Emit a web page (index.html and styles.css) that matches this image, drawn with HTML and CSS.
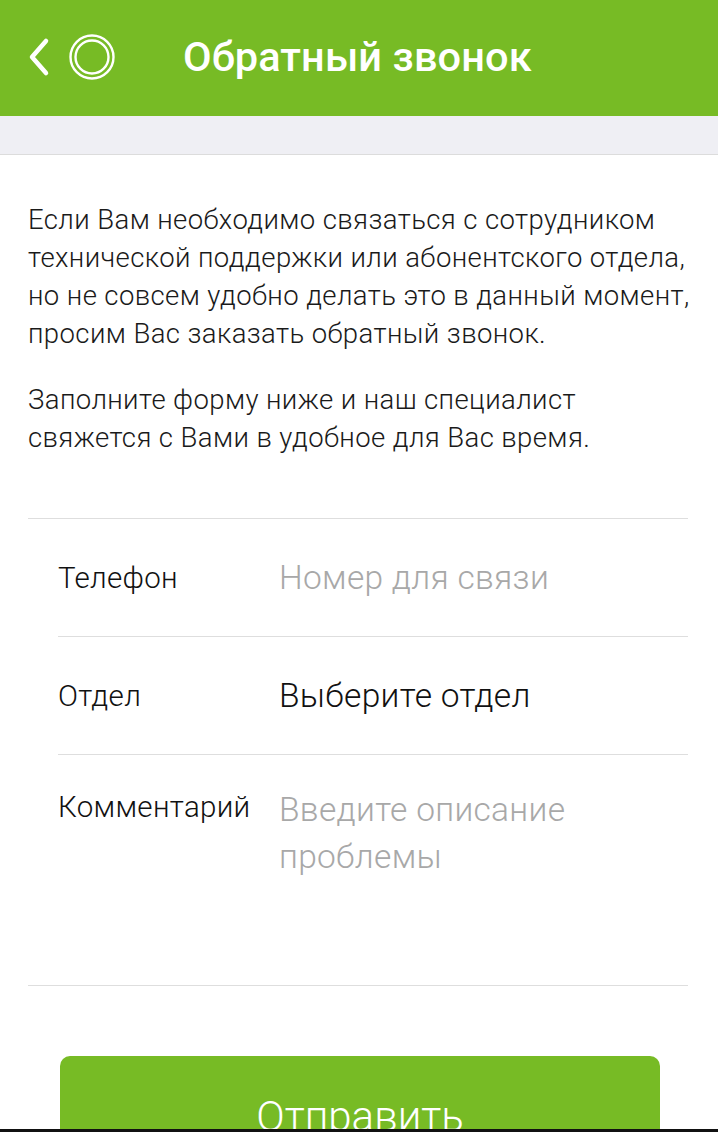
FILE: index.html
```html
<!DOCTYPE html>
<html lang="ru">
<head>
<meta charset="utf-8">
<title>Обратный звонок</title>
<link rel="stylesheet" href="styles.css">
</head>
<body>
<div class="screen">
  <header class="appbar">
    <div class="appbar-icons">
      <svg class="back" width="26" height="40" viewBox="0 0 26 40"><path d="M20 4 L6 20 L20 36" fill="none" stroke="#fff" stroke-width="4.5" stroke-linecap="round" stroke-linejoin="round"/></svg>
      <svg class="logo" width="48" height="48" viewBox="0 0 48 48"><circle cx="24" cy="24" r="21.5" fill="none" stroke="#fff" stroke-width="2.4"/><circle cx="24" cy="24" r="16.5" fill="none" stroke="#fff" stroke-width="2.4"/></svg>
    </div>
    <h1 class="title">Обратный звонок</h1>
  </header>
  <div class="subbar"></div>
  <main class="content">
    <p class="intro">Если Вам необходимо связаться с сотрудником<br>технической поддержки или абонентского отдела,<br>но не совсем удобно делать это в данный момент,<br>просим Вас заказать обратный звонок.</p>
    <p class="intro second">Заполните форму ниже и наш специалист<br>свяжется с Вами в удобное для Вас время.</p>
    <div class="form">
      <div class="row">
        <span class="label">Телефон</span>
        <span class="value placeholder">Номер для связи</span>
      </div>
      <div class="row">
        <span class="label">Отдел</span>
        <span class="value">Выберите отдел</span>
      </div>
      <div class="row comment">
        <span class="label">Комментарий</span>
        <span class="value placeholder">Введите описание<br>проблемы</span>
      </div>
    </div>
    <div class="actions">
      <button class="submit">Отправить</button>
    </div>
  </main>
  <div class="bottom-strip"></div>
</div>
</body>
</html>
```
FILE: styles.css
```css
html, body {
  margin: 0;
  padding: 0;
  background: #fff;
}
body {
  font-family: Roboto, "Noto Sans", "DejaVu Sans", sans-serif;
  color: #1a1a1a;
}
.screen {
  width: 718px;
  height: 1132px;
  overflow: hidden;
  position: relative;
  display: flex;
  flex-direction: column;
}
.appbar {
  height: 116px;
  flex: none;
  background: #77bb25;
  display: flex;
  align-items: center;
}
.appbar-icons {
  display: flex;
  align-items: center;
  padding-left: 26px;
  gap: 16px;
  width: 183px;
  box-sizing: border-box;
  margin-top: -2px;
}
.back { display: block; }
.logo { display: block; }
.title {
  margin: 0;
  color: #fff;
  font-size: 41.5px;
  font-weight: 500;
  letter-spacing: 0.1px;
  margin-top: -4px;
  white-space: nowrap;
}
.subbar {
  height: 38px;
  flex: none;
  background: #efeff4;
  border-bottom: 1px solid #dcdcdc;
}
.content {
  flex: 1;
  padding: 46px 24px 0 28px;
}
.intro {
  margin: 0;
  font-size: 27.5px;
  font-weight: 300;
  letter-spacing: 0.4px;
  line-height: 38px;
  color: #1a1a1a;
  white-space: nowrap;
}
.intro.second {
  margin-top: 28px;
}
.form {
  margin-top: 61px;
  margin-right: 6px;
  border-top: 1px solid #dedede;
}
.row {
  display: flex;
  align-items: center;
  height: 117px;
  margin-left: 30px;
  border-bottom: 1px solid #dedede;
}
.row.comment {
  margin-left: 0;
  padding-left: 30px;
  height: 231px;
  align-items: flex-start;
  padding-top: 33px;
  box-sizing: border-box;
}
.label {
  width: 221px;
  flex: none;
  font-size: 29.5px;
  letter-spacing: 0.3px;
  font-weight: 300;
  color: #111;
}
.value {
  font-size: 33.5px;
  letter-spacing: 0.3px;
  font-weight: 300;
  color: #111;
}
.placeholder {
  color: #a8a8a8;
}
.row.comment .label { line-height: 38px; }
.row.comment .value { line-height: 47px; margin-top: -2px; }
.actions {
  display: flex;
  padding: 70px 28px 0 32px;
}
.submit {
  width: 600px;
  height: 120px;
  border: none;
  border-radius: 10px;
  background: #77bb25;
  color: #fff;
  font-family: inherit;
  font-size: 42px;
  font-weight: 300;
  padding: 0;
}
.bottom-strip {
  position: absolute;
  left: 0;
  right: 0;
  bottom: 0;
  height: 3px;
  background: #111;
}
```
